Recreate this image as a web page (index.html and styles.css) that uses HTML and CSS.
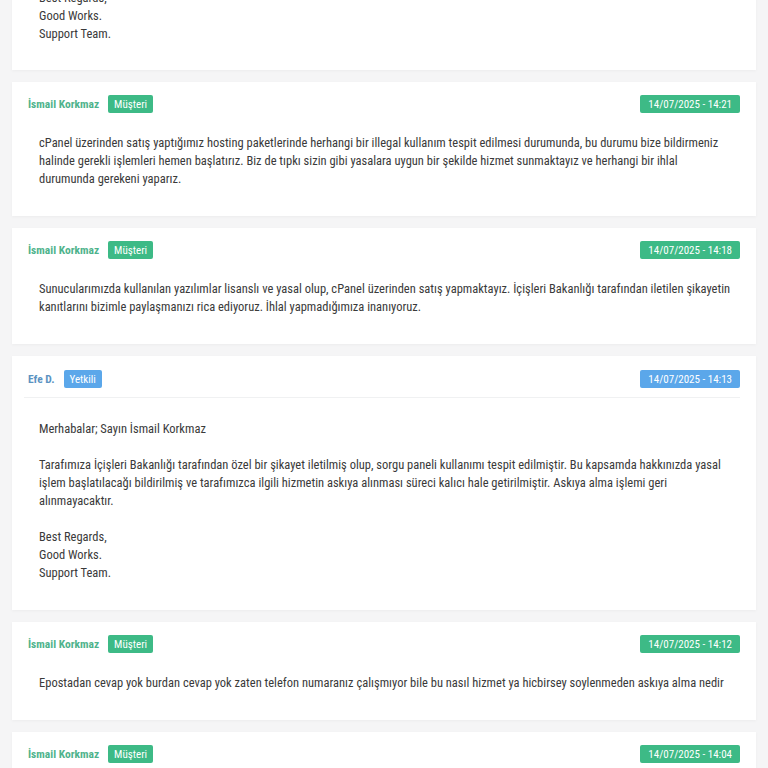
FILE: index.html
```html
<!DOCTYPE html>
<html lang="tr">
<head>
<meta charset="utf-8">
<title>Destek Talebi</title>
<link rel="stylesheet" href="styles.css">
</head>
<body>
<div class="list">
  <div class="card card-first">
    <div class="msg">
      Best Regards,<br>
      Good Works.<br>
      Support Team.
    </div>
  </div>

  <div class="card">
    <div class="head">
      <div class="who"><span class="name">İsmail Korkmaz</span><span class="tag green">Müşteri</span></div>
      <span class="tag green date">14/07/2025 - 14:21</span>
    </div>
    <div class="msg">cPanel üzerinden satış yaptığımız hosting paketlerinde herhangi bir illegal kullanım tespit edilmesi durumunda, bu durumu bize bildirmeniz<br>halinde gerekli işlemleri hemen başlatırız. Biz de tıpkı sizin gibi yasalara uygun bir şekilde hizmet sunmaktayız ve herhangi bir ihlal<br>durumunda gerekeni yaparız.</div>
  </div>

  <div class="card">
    <div class="head">
      <div class="who"><span class="name">İsmail Korkmaz</span><span class="tag green">Müşteri</span></div>
      <span class="tag green date">14/07/2025 - 14:18</span>
    </div>
    <div class="msg">Sunucularımızda kullanılan yazılımlar lisanslı ve yasal olup, cPanel üzerinden satış yapmaktayız. İçişleri Bakanlığı tarafından iletilen şikayetin<br>kanıtlarını bizimle paylaşmanızı rica ediyoruz. İhlal yapmadığımıza inanıyoruz.</div>
  </div>

  <div class="card card-staff">
    <div class="head head-line">
      <div class="who"><span class="name staff">Efe D.</span><span class="tag blue">Yetkili</span></div>
      <span class="tag blue date">14/07/2025 - 14:13</span>
    </div>
    <div class="msg msg-staff">Merhabalar; Sayın İsmail Korkmaz<br><br>Tarafımıza İçişleri Bakanlığı tarafından özel bir şikayet iletilmiş olup, sorgu paneli kullanımı tespit edilmiştir. Bu kapsamda hakkınızda yasal<br>işlem başlatılacağı bildirilmiş ve tarafımızca ilgili hizmetin askıya alınması süreci kalıcı hale getirilmiştir. Askıya alma işlemi geri<br>alınmayacaktır.<br><br>Best Regards,<br>Good Works.<br>Support Team.</div>
  </div>

  <div class="card">
    <div class="head">
      <div class="who"><span class="name">İsmail Korkmaz</span><span class="tag green">Müşteri</span></div>
      <span class="tag green date">14/07/2025 - 14:12</span>
    </div>
    <div class="msg">Epostadan cevap yok burdan cevap yok zaten telefon numaranız çalışmıyor bile bu nasıl hizmet ya hicbirsey soylenmeden askıya alma nedir</div>
  </div>

  <div class="card">
    <div class="head">
      <div class="who"><span class="name">İsmail Korkmaz</span><span class="tag green">Müşteri</span></div>
      <span class="tag green date">14/07/2025 - 14:04</span>
    </div>
  </div>
</div>
</body>
</html>
```

FILE: styles.css
```css
* { box-sizing: border-box; }
html, body { margin: 0; padding: 0; }
body {
  background: #f5f5f6;
  font-family: "Liberation Sans Narrow", "Roboto Condensed", "Liberation Sans", sans-serif;
  color: #3a3a3a;
  overflow: hidden;
  height: 768px;
}
.list {
  display: flex;
  flex-direction: column;
  gap: 12px;
  padding: 0 12px;
  margin-top: -31px;
}
.card {
  background: #fff;
  box-shadow: 0 1px 3px rgba(0, 0, 0, 0.04);
  padding: 13px 16px 28px 16px;
}
.card-first { padding-top: 20px; padding-bottom: 27px; }
.card-staff { padding-top: 14px; padding-bottom: 28px; }
.head {
  display: flex;
  justify-content: space-between;
  align-items: center;
  height: 18px;
}
.head-line {
  height: auto;
  padding-bottom: 9px;
  border-bottom: 1px solid #f0f1f2;
  margin: 0 0 0 -4px;
  padding-left: 4px;
}
.who { display: flex; align-items: center; gap: 9px; }
.name {
  font-weight: bold;
  font-size: 11.5px;
  color: #4fb38c;
}
.name.staff { color: #5b93c2; }
.tag {
  display: inline-flex;
  align-items: center;
  height: 18px;
  padding: 0 6px;
  border-radius: 2px;
  color: #fff;
  font-size: 11px;
}
.tag.green { background: #3dba86; }
.tag.blue { background: #5ba7ea; }
.date { padding: 0 8px; }
.msg {
  font-size: 12.5px;
  line-height: 18px;
  padding-left: 11px;
  margin-top: 21px;
  white-space: nowrap;
}
.card-first .msg { margin-top: 0; }
.msg-staff { margin-top: 22px; }
```
